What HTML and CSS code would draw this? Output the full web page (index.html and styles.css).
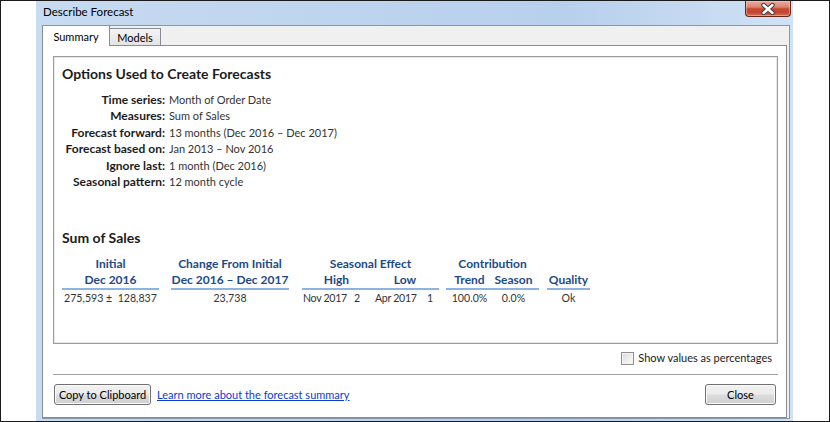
FILE: index.html
```html
<!DOCTYPE html>
<html lang="en">
<head>
<meta charset="utf-8">
<title>Describe Forecast</title>
<link rel="stylesheet" href="styles.css">
</head>
<body>
<div class="screen">
  <div class="window">
    <div class="titlebar">
      <span class="title">Describe Forecast</span>
      <button class="close-x" aria-label="Close">
        <svg width="16" height="12" viewBox="0 0 16 12">
          <path d="M3.5 2 L12.5 10 M12.5 2 L3.5 10" stroke="#3d3d3d" stroke-width="4.4" stroke-linecap="round" fill="none"/>
          <path d="M3.5 2 L12.5 10 M12.5 2 L3.5 10" stroke="#ffffff" stroke-width="2.4" stroke-linecap="round" fill="none"/>
        </svg>
      </button>
    </div>
    <div class="client">
      <div class="tabs">
        <div class="tab active">Summary</div>
        <div class="tab inactive">Models</div>
      </div>
      <div class="panel">
        <div class="summary-box">
          <h2 class="section-title">Options Used to Create Forecasts</h2>
          <dl class="options">
            <dt>Time series:</dt><dd>Month of Order Date</dd>
            <dt>Measures:</dt><dd>Sum of Sales</dd>
            <dt>Forecast forward:</dt><dd>13 months (Dec 2016 – Dec 2017)</dd>
            <dt>Forecast based on:</dt><dd>Jan 2013 – Nov 2016</dd>
            <dt>Ignore last:</dt><dd>1 month (Dec 2016)</dd>
            <dt>Seasonal pattern:</dt><dd>12 month cycle</dd>
          </dl>
          <h2 class="section-title sales-title">Sum of Sales</h2>
          <div class="stats">
            <div class="grp g1">
              <div class="hd">Initial</div>
              <div class="hd hd2">Dec 2016</div>
              <div class="val pre">275,593 ±  128,837</div>
            </div>
            <div class="grp g2">
              <div class="hd">Change From Initial</div>
              <div class="hd hd2">Dec 2016 – Dec 2017</div>
              <div class="val">23,738</div>
            </div>
            <div class="grp g3">
              <div class="hd">Seasonal Effect</div>
              <div class="hd hd2 split3"><span>High</span><span>Low</span></div>
              <div class="val vals3"><span class="s1">Nov 2017</span><span class="s2">2</span><span class="s3">Apr 2017</span><span class="s4">1</span></div>
            </div>
            <div class="grp g4">
              <div class="hd">Contribution</div>
              <div class="hd hd2 split4"><span>Trend</span><span class="c2">Season</span></div>
              <div class="val split4"><span>100.0%</span><span class="c2">0.0%</span></div>
            </div>
            <div class="grp g5">
              <div class="hd">&nbsp;</div>
              <div class="hd hd2">Quality</div>
              <div class="val">Ok</div>
            </div>
          </div>
        </div>
        <label class="check-row"><span class="checkbox"></span><span>Show values as percentages</span></label>
        <div class="sep"></div>
        <div class="button-row">
          <button class="btn copy">Copy to Clipboard</button>
          <a class="link" href="#">Learn more about the forecast summary</a>
          <button class="btn close">Close</button>
        </div>
      </div>
    </div>
  </div>
</div>
</body>
</html>
```

FILE: styles.css
```css
html, body {
  margin: 0;
  padding: 0;
  background: #ffffff;
}

body {
  font-family: Lato, "Liberation Sans", sans-serif;
  font-size: 11px;
  color: #1a1a1a;
}

.screen {
  width: 830px;
  height: 422px;
  box-sizing: border-box;
  border: 1px solid #1b1b1b;
  padding-left: 35px;
  display: flex;
  background: #ffffff;
}

.window {
  width: 757px;
  box-sizing: border-box;
  display: flex;
  flex-direction: column;
  padding: 0 3px 2px 6px;
  background: linear-gradient(to right, #c7dbf1 0%, #bcd4ee 45%, #b7d0ec 70%, #d0e2f5 100%);
}

.titlebar {
  height: 24px;
  flex: none;
  display: flex;
  justify-content: space-between;
  align-items: flex-start;
  padding-left: 1px;
}

.title {
  font-size: 11.5px;
  line-height: 16px;
  margin-top: 3px;
  color: #000000;
}

.close-x {
  width: 46px;
  height: 16px;
  margin-right: -1px;
  padding: 0;
  border: 1px solid #6b2418;
  border-top: none;
  border-radius: 0 0 4px 4px;
  background: linear-gradient(#e9ab9c 0%, #db8571 40%, #c84a33 52%, #c4462f 75%, #d2705a 100%);
  box-shadow: inset 0 0 0 1px rgba(255, 210, 200, 0.45);
  display: flex;
  align-items: center;
  justify-content: center;
}

.close-x svg {
  display: block;
}

.client {
  flex: 1;
  display: flex;
  flex-direction: column;
  background: #f0f0f0;
  border: 1px solid #8a97a8;
  border-left: none;
}

.tabs {
  height: 19px;
  flex: none;
  display: flex;
  align-items: flex-end;
}

.tab {
  box-sizing: border-box;
  font-size: 11px;
  text-align: center;
  color: #000000;
  border: 1px solid #898c95;
  border-bottom: none;
}

.tab.active {
  position: relative;
  z-index: 1;
  width: 68px;
  height: 20px;
  margin-bottom: -1px;
  border-top: none;
  background: #ffffff;
  padding-top: 3px;
  line-height: 16px;
}

.tab.inactive {
  width: 52px;
  height: 17px;
  margin-left: -1px;
  padding-top: 1px;
  line-height: 15px;
  background: linear-gradient(#f4f4f4, #e4e4e4);
}

.panel {
  flex: 1;
  margin-right: 2px;
  background: #ffffff;
  border: 1px solid #898c95;
  padding: 10px 8px 0 10px;
  display: flex;
  flex-direction: column;
}

.summary-box {
  height: 288px;
  flex: none;
  box-sizing: border-box;
  border: 1px solid #9d9d9d;
  box-shadow: inset 0 0 0 1px #e8e8e8;
  padding: 8px 8px;
}

.section-title {
  margin: 0;
  font-size: 14px;
  line-height: 18px;
  font-weight: bold;
  color: #1c1c1c;
}

.sales-title {
  margin-top: 39px;
}

.options {
  margin: 9px 0 0 0;
  display: grid;
  grid-template-columns: 103px auto;
  column-gap: 4px;
  line-height: 16.4px;
}

.options dt {
  text-align: right;
  font-weight: bold;
  font-size: 12px;
  color: #1c1c1c;
  white-space: nowrap;
}

.options dd {
  margin: 0;
  color: #333333;
  white-space: nowrap;
}

.stats {
  margin-top: 8px;
  display: flex;
}

.grp {
  display: flex;
  flex-direction: column;
  text-align: center;
  white-space: nowrap;
}

.g1 { width: 97px; }
.g2 { width: 118px; margin-left: 12px; }
.g3 { width: 137px; margin-left: 13px; }
.g4 { width: 93px; margin-left: 7px; }
.g5 { width: 43px; margin-left: 8px; }

.hd {
  font-weight: bold;
  font-size: 12px;
  color: #1d4a86;
  line-height: 17px;
}

.hd2 {
  line-height: 16px;
  border-bottom: 2px solid #8db3e1;
}

.val {
  line-height: 16px;
  font-size: 10.6px;
  color: #333333;
}

.pre {
  white-space: pre;
}

.split3 {
  display: grid;
  grid-template-columns: 69px 68px;
}

.vals3 {
  display: grid;
  grid-template-columns: 50px 20px 50px 17px;
  text-align: left;
  letter-spacing: -0.3px;
}

.vals3 .s1 { padding-left: 1px; }
.vals3 .s2 { padding-left: 2px; }
.vals3 .s3 { padding-left: 3px; }
.vals3 .s4 { padding-left: 5px; }

.split4 {
  display: grid;
  grid-template-columns: 47px 46px;
}

.split4 .c2 {
  padding-right: 5px;
}

.check-row {
  margin-top: 6px;
  height: 16px;
  display: flex;
  align-items: center;
  justify-content: flex-end;
  padding-right: 6px;
  line-height: 16px;
  color: #1a1a1a;
}

.checkbox {
  width: 13px;
  height: 13px;
  box-sizing: border-box;
  border: 1px solid #8e8f8f;
  background: linear-gradient(135deg, #d8d8d8 0%, #f0f0f0 60%, #fbfbfb 100%);
  box-shadow: inset 0 0 0 1px #f4f4f4;
  margin-right: 4px;
}

.sep {
  margin-top: 8px;
  height: 1px;
  background: #a0a0a0;
}

.button-row {
  margin-top: 9px;
  display: flex;
  align-items: center;
}

.btn {
  height: 21px;
  box-sizing: border-box;
  border: 1px solid #707070;
  border-radius: 3px;
  background: linear-gradient(#f2f2f2 0%, #ebebeb 48%, #dddddd 52%, #cfcfcf 100%);
  box-shadow: inset 0 0 0 1px #fbfbfb;
  font-family: Lato, "Liberation Sans", sans-serif;
  font-size: 11px;
  color: #000000;
  padding: 0;
  line-height: 17px;
  white-space: nowrap;
}

.btn.copy {
  width: 97px;
  margin-left: 1px;
}

.btn.close {
  width: 71px;
  margin-left: auto;
  margin-right: 2px;
}

.link {
  margin-left: 6px;
  color: #0b3bd3;
  text-decoration: underline;
  line-height: 16px;
  white-space: nowrap;
}
```
